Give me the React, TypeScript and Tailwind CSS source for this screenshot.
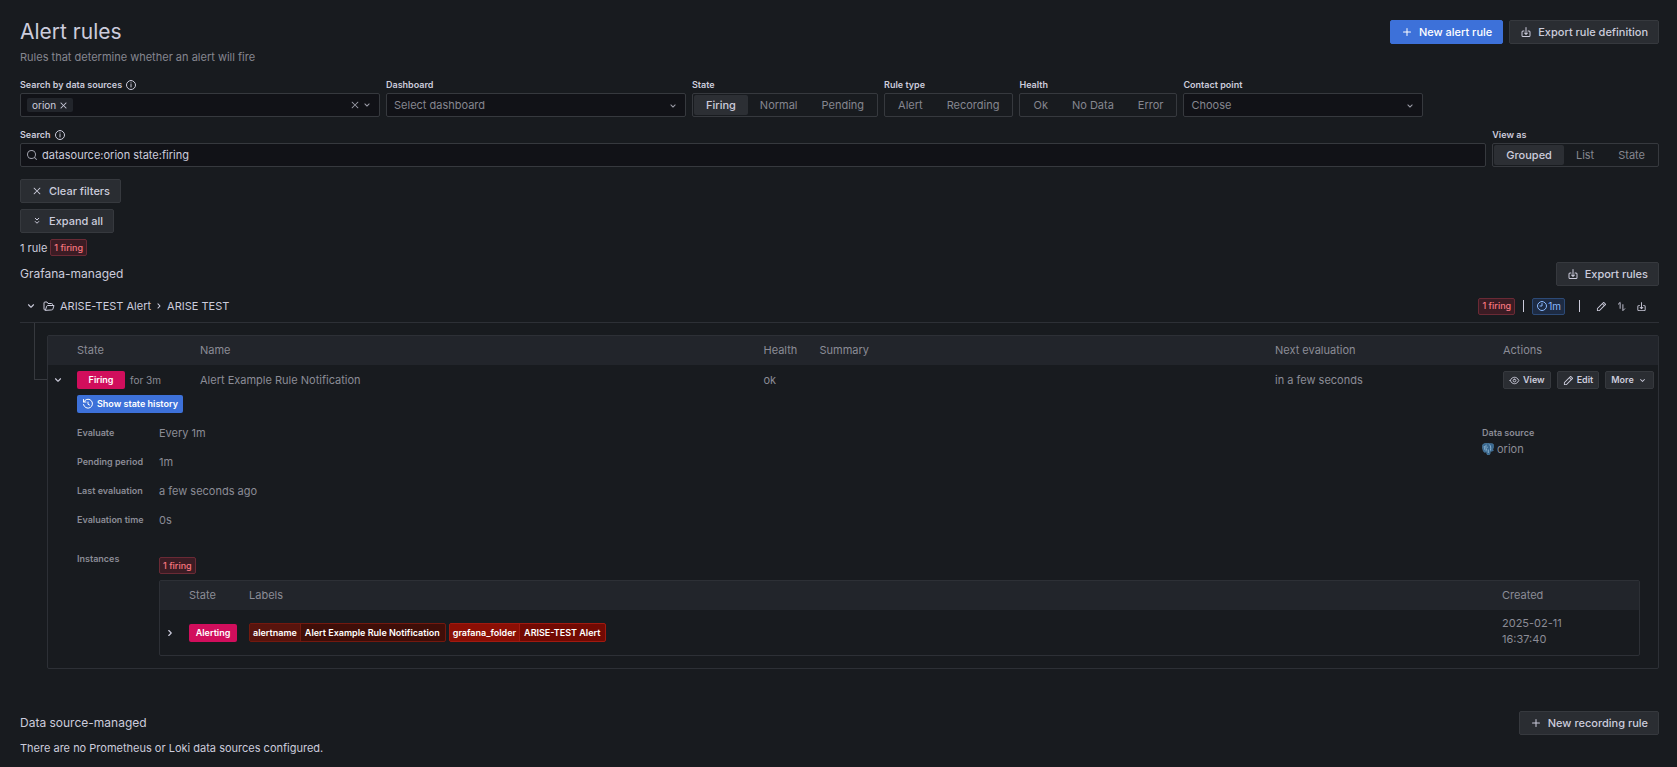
import { useState } from "react";
import type { ReactNode } from "react";
import { clsx } from "clsx";

const paths = {
  plus: "M19,11H13V5a1,1,0,0,0-2,0v6H5a1,1,0,0,0,0,2h6v6a1,1,0,0,0,2,0V13h6a1,1,0,0,0,0-2Z",
  search:
    "M21.71,20.29,18,16.61A9,9,0,1,0,16.61,18l3.68,3.68a1,1,0,0,0,1.42,0A1,1,0,0,0,21.71,20.29ZM11,18a7,7,0,1,1,7-7A7,7,0,0,1,11,18Z",
  times:
    "M13.41,12l6.3-6.29a1,1,0,1,0-1.42-1.42L12,10.59,5.71,4.29A1,1,0,0,0,4.29,5.71L10.59,12l-6.3,6.29a1,1,0,0,0,0,1.42,1,1,0,0,0,1.42,0L12,13.41l6.29,6.3a1,1,0,0,0,1.42,0,1,1,0,0,0,0-1.42Z",
  down: "M17,9.17a1,1,0,0,0-1.41,0L12,12.71,8.46,9.17a1,1,0,0,0-1.41,0,1,1,0,0,0,0,1.42l4.24,4.24a1,1,0,0,0,1.42,0L17,10.59A1,1,0,0,0,17,9.17Z",
  right:
    "M14.83,11.29,10.59,7.05a1,1,0,0,0-1.42,0,1,1,0,0,0,0,1.41L12.71,12,9.17,15.54a1,1,0,0,0,0,1.41,1,1,0,0,0,.71.29,1,1,0,0,0,.71-.29l4.24-4.24A1,1,0,0,0,14.83,11.29Z",
  download:
    "M8.29,13.29a1,1,0,0,0,0,1.42l3,3a1,1,0,0,0,1.42,0l3-3a1,1,0,0,0-1.42-1.42L13,14.59V3a1,1,0,0,0-2,0V14.59l-1.29-1.3A1,1,0,0,0,8.29,13.29ZM18,9H16a1,1,0,0,0,0,2h2a1,1,0,0,1,1,1v7a1,1,0,0,1-1,1H6a1,1,0,0,1-1-1V12a1,1,0,0,1,1-1H8A1,1,0,0,0,8,9H6a3,3,0,0,0-3,3v7a3,3,0,0,0,3,3H18a3,3,0,0,0,3-3V12A3,3,0,0,0,18,9Z",
  pen: "M22,7.24a1,1,0,0,0-.29-.71L17.47,2.29A1,1,0,0,0,16.76,2a1,1,0,0,0-.71.29L13.22,5.12h0L2.29,16.05a1,1,0,0,0-.29.71V21a1,1,0,0,0,1,1H7.24A1,1,0,0,0,8,21.71L18.87,10.78h0L21.71,8a1.19,1.19,0,0,0,.22-.33,1,1,0,0,0,0-.24.7.7,0,0,0,0-.14ZM6.83,20H4V17.17l9.93-9.93,2.83,2.83ZM18.17,8.66,15.34,5.83l1.42-1.41,2.82,2.82Z",
};

const strokes = {
  info: "M12 3a9 9 0 1 0 0 18a9 9 0 1 0 0-18M12 11v5M12 7.6v.6",
  doubleDown: "M8.500 6.500l3.500 3.500l3.500-3.500M8.500 13l3.500 3.500l3.500-3.500",
  folder:
    "M5 20H4a2 2 0 0 1-2-2V6a2 2 0 0 1 2-2h4l2 3h7a2 2 0 0 1 2 2v2M5 20l2.4-7.6A2 2 0 0 1 9.3 11H22l-2.4 7.600A2 2 0 0 1 17.500 20Z",
  clock: "M12 3a9 9 0 1 0 0 18a9 9 0 1 0 0-18M12 7v5H8",
  history: "M3 3v5h5M3.500 8A9 9 0 1 1 3 13M12 8v4.500l3 1.500",
  eye: "M2.500 12C5 7 8.300 5 12 5S19 7 21.500 12C19 17 15.700 19 12 19S5 17 2.500 12ZM12 9a3 3 0 1 0 0 6a3 3 0 1 0 0-6",
  reorder: "M5 7l4-4v13M19 17l-4 4V8",
};

type IconName = keyof typeof paths | keyof typeof strokes;

const Icon = ({ name, className = "size-3" }: { name: IconName; className?: string }) => (
  <svg viewBox="0 0 24 24" className={clsx("shrink-0", className)} aria-hidden="true">
    {name in paths ? (
      <path d={paths[name as keyof typeof paths]} fill="currentColor" />
    ) : (
      <path
        d={strokes[name as keyof typeof strokes]}
        fill="none"
        stroke="currentColor"
        strokeWidth="2"
        strokeLinecap="round"
        strokeLinejoin="round"
      />
    )}
  </svg>
);

const PostgresLogo = () => (
  <svg viewBox="0 0 24 24" className="size-3 shrink-0" aria-hidden="true">
    <path
      d="M6 1C2 1 0 4.500 1 10c.6 4 2.500 9 5 9c1.500 0 2-2 3-3c.5 3-.5 7.500 3.500 8c4 .3 4-4 4.200-7.500c2 .5 4.800-.4 6.300-2c-1-.8-1.200-.5-2-1c2-3 3.500-9 1.500-11c-2-2-5-2-7.500-1.300C12 .5 9 .5 6 1Z"
      fill="#38678f"
      stroke="#5d94bd"
      strokeWidth="1"
    />
    <path
      d="M8.500 3.500C7 6 8 10 9 15M14.500 3c3 2.500 3.500 6 2.500 12M10.500 8.500h1.500M12.500 13v7M4.500 6c0 4 1 7 2 9"
      fill="none"
      stroke="#a9cbe2"
      strokeWidth="1.500"
    />
  </svg>
);

const Button = ({
  icon,
  iconClass,
  primary,
  children,
}: {
  icon: IconName;
  iconClass?: string;
  primary?: boolean;
  children: ReactNode;
}) => (
  <button
    type="button"
    className={clsx(
      "flex h-6 items-center gap-1.5 rounded-xs border px-[10px] pb-px font-medium whitespace-nowrap",
      primary ? "border-[#3d71d9] bg-[#3d71d9] text-white" : "border-[#36393e] bg-[#2a2d32]"
    )}
  >
    <span className="flex w-3 justify-center pt-px">
      <Icon name={icon} className={iconClass} />
    </span>
    {children}
  </button>
);

const SmallButton = ({ children }: { children: ReactNode }) => (
  <button
    type="button"
    className="flex h-[18px] items-center gap-[3px] rounded-xs border border-[#36393e] bg-[#2a2d32] px-[5px] text-[9px] font-semibold text-[#ccccdc]"
  >
    {children}
  </button>
);

const FiringBadge = () => (
  <span className="inline-flex h-[17px] items-center rounded-xs border border-[#6a2a35] bg-[#3b1c24] px-[3px] text-[9px] font-medium text-[#f8767f]">
    1 firing
  </span>
);

const StateTag = ({ children }: { children: ReactNode }) => (
  <span className="flex h-[18px] w-12 items-center justify-center rounded-xs bg-[#d10e5c] text-[9px] font-semibold text-white">
    {children}
  </span>
);

const RadioGroup = ({
  label,
  options,
  initial,
}: {
  label: string;
  options: string[];
  initial?: string;
}) => {
  const [value, setValue] = useState(initial);

  return (
    <fieldset>
      <legend className="mb-0.5 text-[9px] leading-3 font-semibold">{label}</legend>
      <div className="flex h-6 items-stretch rounded-xs border border-[#36393e] p-px">
        {options.map((option) => (
          <label key={option} className="relative flex">
            <input
              type="radio"
              name={label}
              checked={value === option}
              onChange={() => setValue(option)}
              className="peer sr-only"
            />
            <span className="flex items-center rounded-xs px-3 whitespace-nowrap text-[#85868f] peer-checked:bg-[#2c2f34] peer-checked:font-medium peer-checked:text-[#ccccdc]">
              {option}
            </span>
          </label>
        ))}
      </div>
    </fieldset>
  );
};

const SelectField = ({
  id,
  label,
  placeholder,
  className,
}: {
  id: string;
  label: string;
  placeholder: string;
  className: string;
}) => (
  <div className={className}>
    <label htmlFor={id} className="mb-0.5 block text-[9px] leading-3 font-semibold">
      {label}
    </label>
    <div className="relative">
      <select
        id={id}
        className="block h-6 w-full appearance-none rounded-xs border border-[#36393e] bg-[#111217] px-[7px] text-[#85868f]"
      >
        <option>{placeholder}</option>
      </select>
      <Icon name="down" className="pointer-events-none absolute top-[7px] right-[7px] size-3 text-[#9d9ea9]" />
    </div>
  </div>
);

const Detail = ({ label, children }: { label: string; children: ReactNode }) => (
  <div className="flex items-center">
    <dt className="w-[82px] shrink-0 text-[9px] font-semibold">{label}</dt>
    <dd>{children}</dd>
  </div>
);

const LabelTag = ({ name, value, dark }: { name: string; value: string; dark?: boolean }) => (
  <li
    className={clsx(
      "flex h-[19px] items-center rounded-xs border text-[9px] leading-[17px] font-semibold text-white",
      dark ? "border-[#73190f] bg-[#3f0e08]" : "border-[#a01a10] bg-[#720a03]"
    )}
  >
    <span className={clsx("border-r px-[3px]", dark ? "border-[#73190f] bg-[#58140d]" : "border-[#a01a10] bg-[#8b0f05]")}>
      {name}
    </span>
    <span className="pr-[5px] pl-1">{value}</span>
  </li>
);

const InstancesTable = () => (
  <div className="mt-1.5 rounded-xs border border-[#2d3036]">
    <table className="w-full table-fixed text-left">
      <colgroup>
        <col className="w-[29px]" />
        <col className="w-[60px]" />
        <col />
        <col className="w-[137px]" />
      </colgroup>
      <thead className="bg-[#22252b]">
        <tr className="h-[29px]">
          <th />
          <th className="pb-0.5 font-normal">State</th>
          <th className="pb-0.5 font-normal">Labels</th>
          <th className="pb-0.5 font-normal">Created</th>
        </tr>
      </thead>
      <tbody>
        <tr className="h-[45px]">
          <td>
            <button type="button" aria-label="Expand instance" className="ml-[3px] block text-[#ccccdc]">
              <Icon name="right" className="size-3.5" />
            </button>
          </td>
          <td>
            <StateTag>Alerting</StateTag>
          </td>
          <td>
            <ul className="flex gap-[3px]">
              <LabelTag name="alertname" value="Alert Example Rule Notification" dark />
              <LabelTag name="grafana_folder" value="ARISE-TEST Alert" />
            </ul>
          </td>
          <td className="pr-16 pb-[3px] leading-4">2025-02-11 16:37:40</td>
        </tr>
      </tbody>
    </table>
  </div>
);

const RuleDetails = () => (
  <div className="pr-[18px] pb-3">
    <button
      type="button"
      className="flex h-[18px] items-center gap-[3px] rounded-xs bg-[#3d71d9] px-[5px] text-[9px] font-semibold text-white"
    >
      <Icon name="history" />
      Show state history
    </button>
    <div className="mt-3 flex justify-between">
      <dl className="flex flex-col gap-[13px]">
        <Detail label="Evaluate">Every 1m</Detail>
        <Detail label="Pending period">1m</Detail>
        <Detail label="Last evaluation">a few seconds ago</Detail>
        <Detail label="Evaluation time">0s</Detail>
      </dl>
      <dl className="w-[158px]">
        <dt className="text-[9px] leading-4 font-semibold">Data source</dt>
        <dd className="flex items-center gap-[3px]">
          <PostgresLogo />
          orion
        </dd>
      </dl>
    </div>
    <div className="mt-[23px] flex">
      <div className="w-[82px] shrink-0 text-[9px] font-semibold">Instances</div>
      <div className="min-w-0 flex-1 pt-1.5">
        <div className="flex">
          <FiringBadge />
        </div>
        <InstancesTable />
      </div>
    </div>
  </div>
);

const RulesTable = () => (
  <div className="rounded-xs border border-[#2d3036] text-[#8b8c96]">
    <table className="w-full table-fixed text-left">
      <colgroup>
        <col className="w-[29px]" />
        <col className="w-[123px]" />
        <col className="w-[35%]" />
        <col className="w-14" />
        <col />
        <col className="w-[228px]" />
        <col className="w-[155px]" />
      </colgroup>
      <thead className="bg-[#22252b]">
        <tr className="h-[29px]">
          <th />
          <th className="pb-0.5 font-normal">State</th>
          <th className="pb-0.5 font-normal">Name</th>
          <th className="pb-0.5 font-normal">Health</th>
          <th className="pb-0.5 font-normal">Summary</th>
          <th className="pb-0.5 font-normal">Next evaluation</th>
          <th className="pb-0.5 font-normal">Actions</th>
        </tr>
      </thead>
      <tbody>
        <tr className="h-[30px]">
          <td>
            <button type="button" aria-label="Collapse rule" className="ml-[3px] block text-[#ccccdc]">
              <Icon name="down" className="size-3.5" />
            </button>
          </td>
          <td>
            <div className="flex items-center gap-[5px]">
              <StateTag>Firing</StateTag>
              <span className="text-[10px]">for 3m</span>
            </div>
          </td>
          <td>Alert Example Rule Notification</td>
          <td>ok</td>
          <td />
          <td>in a few seconds</td>
          <td>
            <div className="flex gap-1.5">
              <SmallButton>
                <Icon name="eye" className="size-[11px]" />
                View
              </SmallButton>
              <SmallButton>
                <Icon name="pen" className="size-[11px]" />
                Edit
              </SmallButton>
              <SmallButton>
                More
                <Icon name="down" className="size-[11px]" />
              </SmallButton>
            </div>
          </td>
        </tr>
        <tr>
          <td />
          <td colSpan={6}>
            <RuleDetails />
          </td>
        </tr>
      </tbody>
    </table>
  </div>
);

export default function App() {
  const [query, setQuery] = useState("datasource:orion state:firing");

  return (
    <main className="min-h-screen bg-[#181b1f] pt-5 pr-[18px] pb-2 pl-5 font-['Inter','Liberation_Sans',sans-serif] text-[11px] leading-4 text-[#ccccdc]">
      <header className="flex items-start justify-between">
        <div>
          <h1 className="text-[21px] leading-6">Alert rules</h1>
          <p className="mt-[5px] text-[#85868f]">Rules that determine whether an alert will fire</p>
        </div>
        <div className="flex gap-1.5">
          <Button icon="plus" primary>
            New alert rule
          </Button>
          <Button icon="download">Export rule definition</Button>
        </div>
      </header>

      {/* Filters */}
      <div className="mt-3.5 flex gap-1.5">
        <div className="w-[360px]">
          <label htmlFor="sources" className="mb-0.5 flex items-center gap-[3px] text-[9px] leading-3 font-semibold">
            Search by data sources
            <Icon name="info" />
          </label>
          <div className="flex h-6 items-center rounded-xs border border-[#36393e] bg-[#111217] px-1.5 text-[#9d9ea9]">
            <span className="flex h-3.5 items-center gap-[3px] rounded-xs bg-[#22252b] px-[5px] text-[10px] text-[#ccccdc]">
              orion
              <button type="button" aria-label="Remove orion">
                <Icon name="times" className="size-[9px]" />
              </button>
            </span>
            <input id="sources" type="text" className="min-w-0 flex-1 bg-transparent outline-none" />
            <button type="button" aria-label="Clear data sources" className="mr-px">
              <Icon name="times" className="size-2.5" />
            </button>
            <Icon name="down" />
          </div>
        </div>
        <SelectField id="dashboard" label="Dashboard" placeholder="Select dashboard" className="w-[300px]" />
        <RadioGroup label="State" options={["Firing", "Normal", "Pending"]} initial="Firing" />
        <RadioGroup label="Rule type" options={["Alert", "Recording"]} />
        <RadioGroup label="Health" options={["Ok", "No Data", "Error"]} />
        <SelectField id="contact" label="Contact point" placeholder="Choose" className="w-60" />
      </div>

      <div className="mt-3 flex gap-1.5">
        <div className="flex-1">
          <label htmlFor="search" className="mb-0.5 flex items-center gap-[3px] text-[9px] leading-3 font-semibold">
            Search
            <Icon name="info" />
          </label>
          <div className="flex h-6 items-center gap-1 rounded-xs border border-[#36393e] bg-[#111217] px-[5px]">
            <Icon name="search" className="size-3 text-[#9d9ea9]" />
            <input
              id="search"
              type="text"
              value={query}
              onChange={(e) => setQuery(e.target.value)}
              className="flex-1 bg-transparent outline-none"
            />
          </div>
        </div>
        <RadioGroup label="View as" options={["Grouped", "List", "State"]} initial="Grouped" />
      </div>

      <div className="mt-3 flex flex-col items-start gap-1.5">
        <Button icon="times" iconClass="size-2.5">
          Clear filters
        </Button>
        <Button icon="doubleDown">Expand all</Button>
        <div className="flex items-center gap-[3px]">
          1 rule
          <FiringBadge />
        </div>
      </div>

      {/* Grafana-managed rules */}
      <section className="mt-1.5">
        <div className="flex items-center justify-between">
          <h2 className="text-xs">Grafana-managed</h2>
          <Button icon="download">Export rules</Button>
        </div>
        <div className="flex h-[37px] items-center border-b border-[#2d3036] pt-1">
          <button type="button" aria-label="Collapse group" className="ml-1">
            <Icon name="down" className="size-3.5" />
          </button>
          <Icon name="folder" className="ml-[5px] size-3" />
          <h3 className="ml-[5px] flex items-center gap-0.5">
            ARISE-TEST Alert
            <Icon name="right" className="size-3" />
            ARISE TEST
          </h3>
          <div className="ml-auto flex items-center pr-3">
            <FiringBadge />
            <span className="ml-2 h-3 w-px bg-[#ccccdc]" />
            <span className="ml-2 flex h-[17px] items-center rounded-xs border border-[#2c4a76] bg-[#1d2b43] px-[3px] text-[10px] text-[#8ab8ff]">
              <Icon name="clock" />
              1m
            </span>
            <span className="ml-3.5 h-3 w-px bg-[#ccccdc]" />
            <button type="button" aria-label="Edit group" className="ml-4">
              <Icon name="pen" className="size-[11px]" />
            </button>
            <button type="button" aria-label="Reorder rules" className="ml-[9px]">
              <Icon name="reorder" className="size-[11px]" />
            </button>
            <button type="button" aria-label="Export group" className="ml-[9px]">
              <Icon name="download" className="size-[11px]" />
            </button>
          </div>
        </div>
        <div className="flex pl-3.5">
          <div className="h-[57px] w-[13px] shrink-0 border-b border-l border-[#36393e]" />
          <div className="min-w-0 flex-1 pt-3">
            <RulesTable />
          </div>
        </div>
      </section>

      <section className="mt-[42px]">
        <div className="flex items-center justify-between">
          <h2 className="text-xs">Data source-managed</h2>
          <Button icon="plus">New recording rule</Button>
        </div>
        <p className="mt-[5px]">There are no Prometheus or Loki data sources configured.</p>
      </section>
    </main>
  );
}
